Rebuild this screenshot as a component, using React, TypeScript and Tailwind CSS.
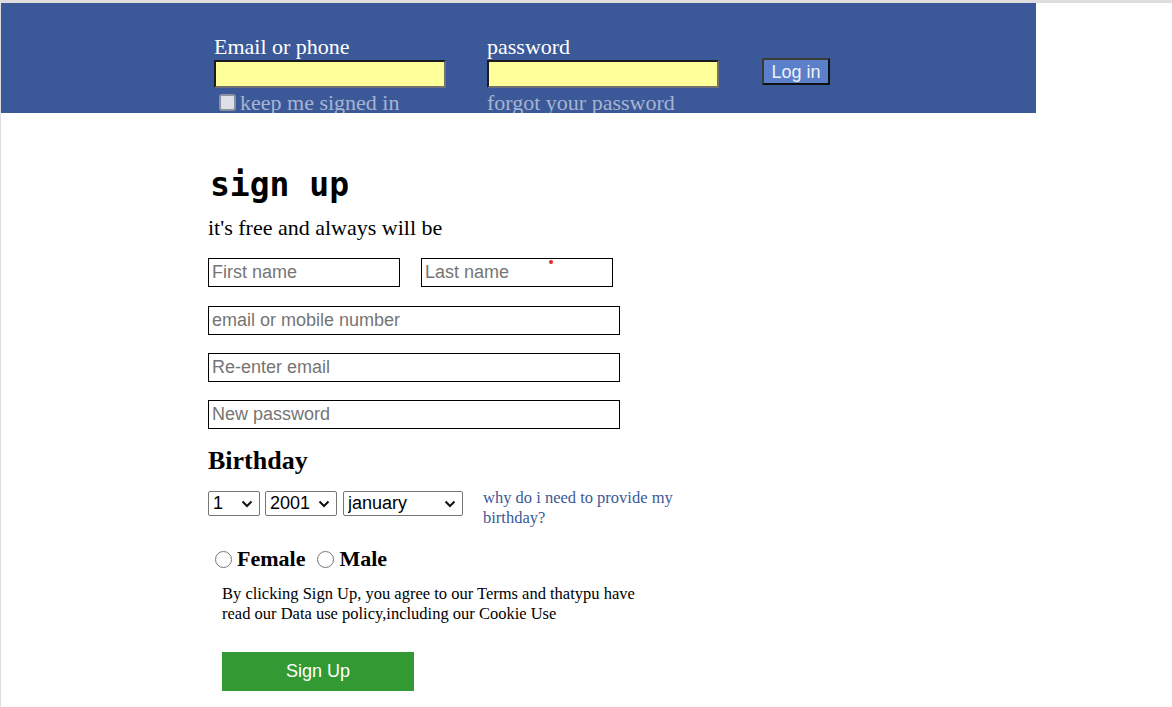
import React from 'react';

const serif = { fontFamily: '"Liberation Serif", "Times New Roman", serif' };

function HeaderField({ label, footer }: { label: string; footer: React.ReactNode }) {
  return (
    <div className="flex flex-col w-[232px]">
      <label className="text-[22px] leading-[26px] text-white whitespace-nowrap">{label}</label>
      <input
        type="text"
        className="h-[28px] w-[232px] bg-[#ffff99] border-2 border-t-[#1c1c1c] border-l-[#1c1c1c] border-b-[#707070] border-r-[#707070] outline-none"
      />
      <div className="mt-[2px] h-[25px] text-[22px] leading-[25px] whitespace-nowrap text-[#a7b4d1]">{footer}</div>
    </div>
  );
}

function TextBox({ placeholder, width }: { placeholder: string; width: string }) {
  return (
    <input
      type="text"
      placeholder={placeholder}
      className={`${width} h-[29px] border border-black px-[3px] text-[18px] placeholder:text-[#757575] outline-none font-['Liberation_Sans',Arial,sans-serif]`}
    />
  );
}

function Dropdown({ width, value, options }: { width: string; value: string; options: string[] }) {
  return (
    <div className={`relative ${width} h-[25px]`}>
      <select
        defaultValue={value}
        className="appearance-none w-full h-full border border-[#767676] rounded-[2px] bg-white pl-[4px] text-[18px] leading-[21px] text-black font-['Liberation_Sans',Arial,sans-serif]"
      >
        {options.map((o) => (
          <option key={o}>{o}</option>
        ))}
      </select>
      <svg
        className="pointer-events-none absolute right-[7px] top-[9px]"
        width="12"
        height="8"
        viewBox="0 0 12 8"
        fill="none"
      >
        <path d="M1.5 1.5 L6 6 L10.5 1.5" stroke="#111" strokeWidth="2" />
      </svg>
    </div>
  );
}

export default function App() {
  return (
    <div className="min-h-[707px] w-[1172px] bg-white border-t-[3px] border-l border-[#dedede]" style={serif}>
      <header className="w-[1035px] h-[110px] bg-[#3b5998] overflow-hidden pl-[213px] pt-[31px] flex items-start">
        <HeaderField
          label="Email or phone"
          footer={
            <>
              <input
                type="checkbox"
                className="appearance-none inline-block align-[-1px] ml-[5px] mr-[4px] w-[17px] h-[17px] rounded-[3px] border-2 border-[#8b91a1] bg-[#dde0e9]"
              />
              keep me signed in
            </>
          }
        />
        <div className="ml-[41px]">
          <HeaderField label="password" footer="forgot your password" />
        </div>
        <div className="ml-[43px] pt-[24px]">
          <button className="w-[68px] h-[27px] bg-[#5b80c9] border-2 border-t-[#3a3a3a] border-l-[#3a3a3a] border-b-[#111] border-r-[#111] text-[18px] leading-[20px] text-[#eef2fa] font-['Liberation_Sans',Arial,sans-serif]">
            Log in
          </button>
        </div>
      </header>

      <main className="pl-[207px]">
        <h1 className="mt-[53px] pl-[2px] text-[33px] leading-[38px] font-bold text-black font-['DejaVu_Sans_Mono','Liberation_Mono',monospace]">
          sign up
        </h1>
        <p className="mt-[12px] text-[22px] leading-[24px] text-black">it's free and always will be</p>

        <div className="mt-[18px] flex gap-[21px] relative w-[412px]">
          <TextBox placeholder="First name" width="w-[192px]" />
          <TextBox placeholder="Last name" width="w-[192px]" />
          <span className="absolute left-[341px] top-[2px] w-[4px] h-[4px] rounded-full bg-[#e8232a]" />
        </div>
        <div className="mt-[19px] flex flex-col gap-[18px]">
          <TextBox placeholder="email or mobile number" width="w-[412px]" />
          <TextBox placeholder="Re-enter email" width="w-[412px]" />
          <TextBox placeholder="New password" width="w-[412px]" />
        </div>

        <h2 className="mt-[17px] text-[26px] leading-[30px] font-bold text-black">Birthday</h2>

        <div className="mt-[15px] flex items-start">
          <Dropdown width="w-[52px]" value="1" options={['1', '2', '3', '4', '5']} />
          <div className="ml-[5px]">
            <Dropdown width="w-[72px]" value="2001" options={['2001', '2002', '2003']} />
          </div>
          <div className="ml-[6px]">
            <Dropdown width="w-[120px]" value="january" options={['january', 'february', 'march']} />
          </div>
          <a className="ml-[20px] mt-[-3px] w-[200px] text-[16.5px] leading-[20px] text-[#3b5998]">
            why do i need to provide my birthday?
          </a>
        </div>

        <div className="mt-[18px] ml-[7px] flex items-center text-[22px] leading-[26px] font-bold text-black">
          <input type="radio" name="sex" className="w-[17px] h-[17px] m-0" />
          <span className="ml-[5px]">Female</span>
          <input type="radio" name="sex" className="ml-[12px] w-[17px] h-[17px]" />
          <span className="ml-[5px]">Male</span>
        </div>

        <p className="mt-[12px] ml-[14px] w-[440px] text-[16.5px] leading-[20px] text-black">
          By clicking Sign Up, you agree to our Terms and thatypu have read our Data use policy,including our Cookie Use
        </p>

        <button className="mt-[28px] ml-[14px] w-[192px] h-[39px] bg-[#339933] text-white text-[18px] font-['Liberation_Sans',Arial,sans-serif]">
          Sign Up
        </button>
      </main>
    </div>
  );
}
